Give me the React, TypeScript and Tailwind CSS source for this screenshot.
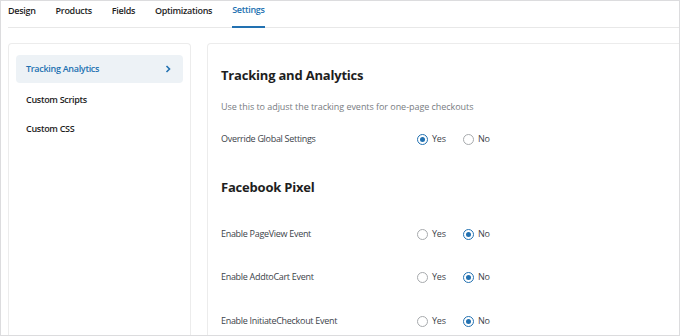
import React from "react";

const font = { fontFamily: '"Open Sans", "Noto Sans", sans-serif' };

function Radio({ checked }: { checked: boolean }) {
  return (
    <span
      className={
        "flex h-[11px] w-[11px] items-center justify-center rounded-full border bg-white " +
        (checked ? "border-[#2271b1]" : "border-[#a7aaad]")
      }
    >
      {checked && <span className="h-[5px] w-[5px] rounded-full bg-[#2271b1]" />}
    </span>
  );
}

function Row({ label, yes, className }: { label: string; yes: boolean; className: string }) {
  return (
    <div className={"flex h-[16px] items-center text-[9px] text-[#3c434a] " + className}>
      <div className="w-[196px] tracking-[-0.3px]">{label}</div>
      <div className="flex w-[46px] items-center gap-[4px]">
        <Radio checked={yes} />
        <span className="tracking-[-0.2px]">Yes</span>
      </div>
      <div className="flex items-center gap-[4px]">
        <Radio checked={!yes} />
        <span className="tracking-[-0.2px]">No</span>
      </div>
    </div>
  );
}

export default function App() {
  const tabs = ["Design", "Products", "Fields", "Optimizations", "Settings"];
  return (
    <div
      style={font}
      className="flex h-[336px] w-[680px] flex-col overflow-hidden border border-[#dcdcde] bg-white"
    >
      <div className="ml-[7px] flex h-[27px] items-stretch gap-[20px] border-b border-[#e8e8e8]">
        {tabs.map((t) => (
          <div
            key={t}
            className={
              "flex items-center pb-[7px] text-[9px] font-semibold tracking-[-0.3px] " +
              (t === "Settings"
                ? "-mb-[1px] border-b-2 border-[#2271b1] text-[#2271b1]"
                : "text-[#1e1e1e]")
            }
          >
            {t}
          </div>
        ))}
      </div>
      <div className="flex flex-1 gap-[16px] pl-[7px] pt-[15px]">
        <div className="w-[183px] rounded-t-[4px] border border-b-0 border-[#ececec] px-[7px] pt-[11px]">
          <div className="flex h-[28px] items-center justify-between rounded-[4px] bg-[#edf2f6] pl-[10px] pr-[12px] text-[9px] font-semibold tracking-[-0.3px] text-[#2271b1]">
            <span>Tracking Analytics</span>
            <svg width="6" height="8" viewBox="0 0 6 8" fill="none">
              <path d="M1.5 1 L4.5 4 L1.5 7" stroke="#2271b1" strokeWidth="1.6" />
            </svg>
          </div>
          <div className="mt-[3px] flex h-[28px] items-center pl-[10px] text-[9px] font-semibold tracking-[-0.3px] text-[#1e1e1e]">
            Custom Scripts
          </div>
          <div className="mt-[1px] flex h-[28px] items-center pl-[10px] text-[9px] font-semibold tracking-[-0.3px] text-[#1e1e1e]">
            Custom CSS
          </div>
        </div>
        <div className="-mr-[10px] flex-1 rounded-tl-[4px] border border-b-0 border-[#ececec] pl-[13px] pt-[21px]">
          <div className="h-[20px] text-[13px] font-bold leading-[20px] tracking-[-0.2px] text-[#1e1e1e]">
            Tracking and Analytics
          </div>
          <div className="mt-[14px] h-[16px] text-[9px] leading-[16px] tracking-[-0.05px] text-[#787c82]">
            Use this to adjust the tracking events for one-page checkouts
          </div>
          <Row label="Override Global Settings" yes={true} className="mt-[16px]" />
          <div className="mt-[30px] h-[20px] text-[13px] font-bold leading-[20px] tracking-[-0.2px] text-[#1e1e1e]">
            Facebook Pixel
          </div>
          <Row label="Enable PageView Event" yes={false} className="mt-[29px]" />
          <Row label="Enable AddtoCart Event" yes={false} className="mt-[27px]" />
          <Row label="Enable InitiateCheckout Event" yes={false} className="mt-[28px]" />
        </div>
      </div>
    </div>
  );
}
